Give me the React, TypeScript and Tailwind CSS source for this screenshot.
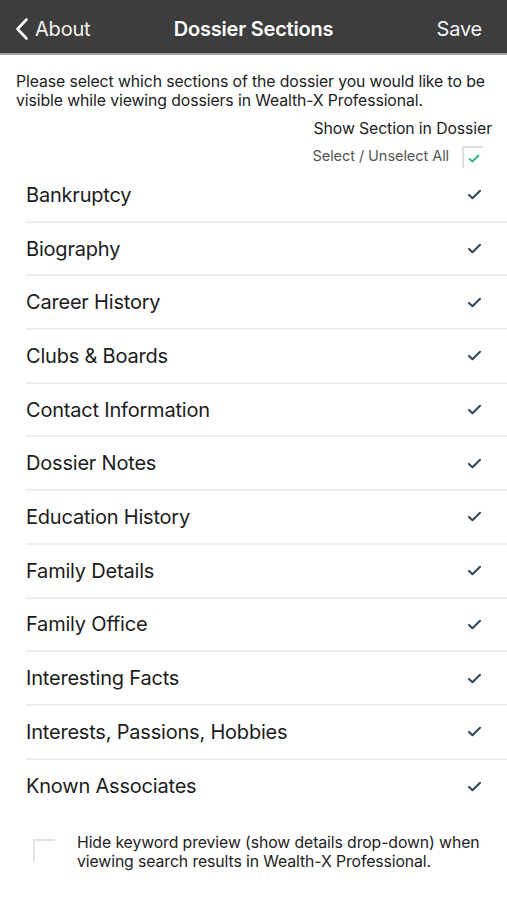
import React from 'react';

const sections = [
  'Bankruptcy',
  'Biography',
  'Career History',
  'Clubs & Boards',
  'Contact Information',
  'Dossier Notes',
  'Education History',
  'Family Details',
  'Family Office',
  'Interesting Facts',
  'Interests, Passions, Hobbies',
  'Known Associates',
];

function Check({ className, weight = 2 }: { className?: string; weight?: number }) {
  return (
    <svg viewBox="0 0 16 12" className={className} fill="none" stroke="currentColor" strokeWidth={weight} strokeLinecap="round" strokeLinejoin="round">
      <path d="M2 6.5l3.8 3.5L14 2" />
    </svg>
  );
}

export default function App() {
  return (
    <div className="min-h-screen bg-white text-[#1c1c1c] font-['Inter',sans-serif]">
      {/* Nav bar */}
      <header className="h-[55px] pt-[4px] bg-[#3d3d3d] border-b-2 border-[#a3a3a3] grid grid-cols-[1fr_auto_1fr] items-center text-white">
        <div className="flex items-center pl-[15px] gap-[6px]">
          <svg viewBox="0 0 14 24" className="w-[14px] h-[24px]" fill="none" stroke="currentColor" strokeWidth="2.6" strokeLinecap="round" strokeLinejoin="round">
            <path d="M11.5 2.5L2.5 12l9 9.5" />
          </svg>
          <span className="text-[20px] text-[#f2f2f2] tracking-[-0.2px]">About</span>
        </div>
        <h1 className="text-[20px] font-semibold tracking-[-0.2px]">Dossier Sections</h1>
        <div className="flex justify-end pr-[25px]">
          <span className="text-[20px] text-[#f2f2f2] tracking-[-0.2px]">Save</span>
        </div>
      </header>

      <p className="px-[16px] pt-[17px] text-[15.8px] leading-[19px] text-[#222] tracking-[-0.1px]">
        Please select which sections of the dossier you would like to be visible while viewing dossiers in Wealth-X Professional.
      </p>

      <div className="flex flex-col items-end pr-[15px] pt-[9px]">
        <span className="text-[15.8px] leading-[19px] text-[#222] tracking-[-0.1px]">Show Section in Dossier</span>
        <div className="flex items-center gap-[13px] mt-[8px] pr-[9px]">
          <span className="text-[14.6px] text-[#555] tracking-[-0.1px]">Select / Unselect All</span>
          <div className="w-[21px] h-[22px] border-l-2 border-t-2 border-[#e0e0e0] flex items-center justify-center">
            <Check className="w-[12px] h-[9px] text-[#2fae8c]" weight={2.4} />
          </div>
        </div>
      </div>

      <ul className="pl-[26px] mt-[1px]">
        {sections.map((name, i) => (
          <li
            key={name}
            className={`h-[53.7px] flex items-center justify-between pr-[25px] ${i < sections.length - 1 ? 'border-b-2 border-[#eeeeee]' : ''}`}
          >
            <span className="text-[20px] tracking-[-0.2px]">{name}</span>
            <Check className="w-[15px] h-[11px] text-[#34495e]" weight={2.3} />
          </li>
        ))}
      </ul>

      <div className="flex items-start pl-[33px] pr-[20px] mt-[21px] gap-[22px]">
        <div className="w-[22px] h-[23px] mt-[5px] border-l-2 border-t-2 border-[#e4e4e4] shrink-0" />
        <p className="text-[15.8px] leading-[18.5px] text-[#222] tracking-[-0.1px]">
          Hide keyword preview (show details drop-down) when viewing search results in Wealth-X Professional.
        </p>
      </div>
    </div>
  );
}
